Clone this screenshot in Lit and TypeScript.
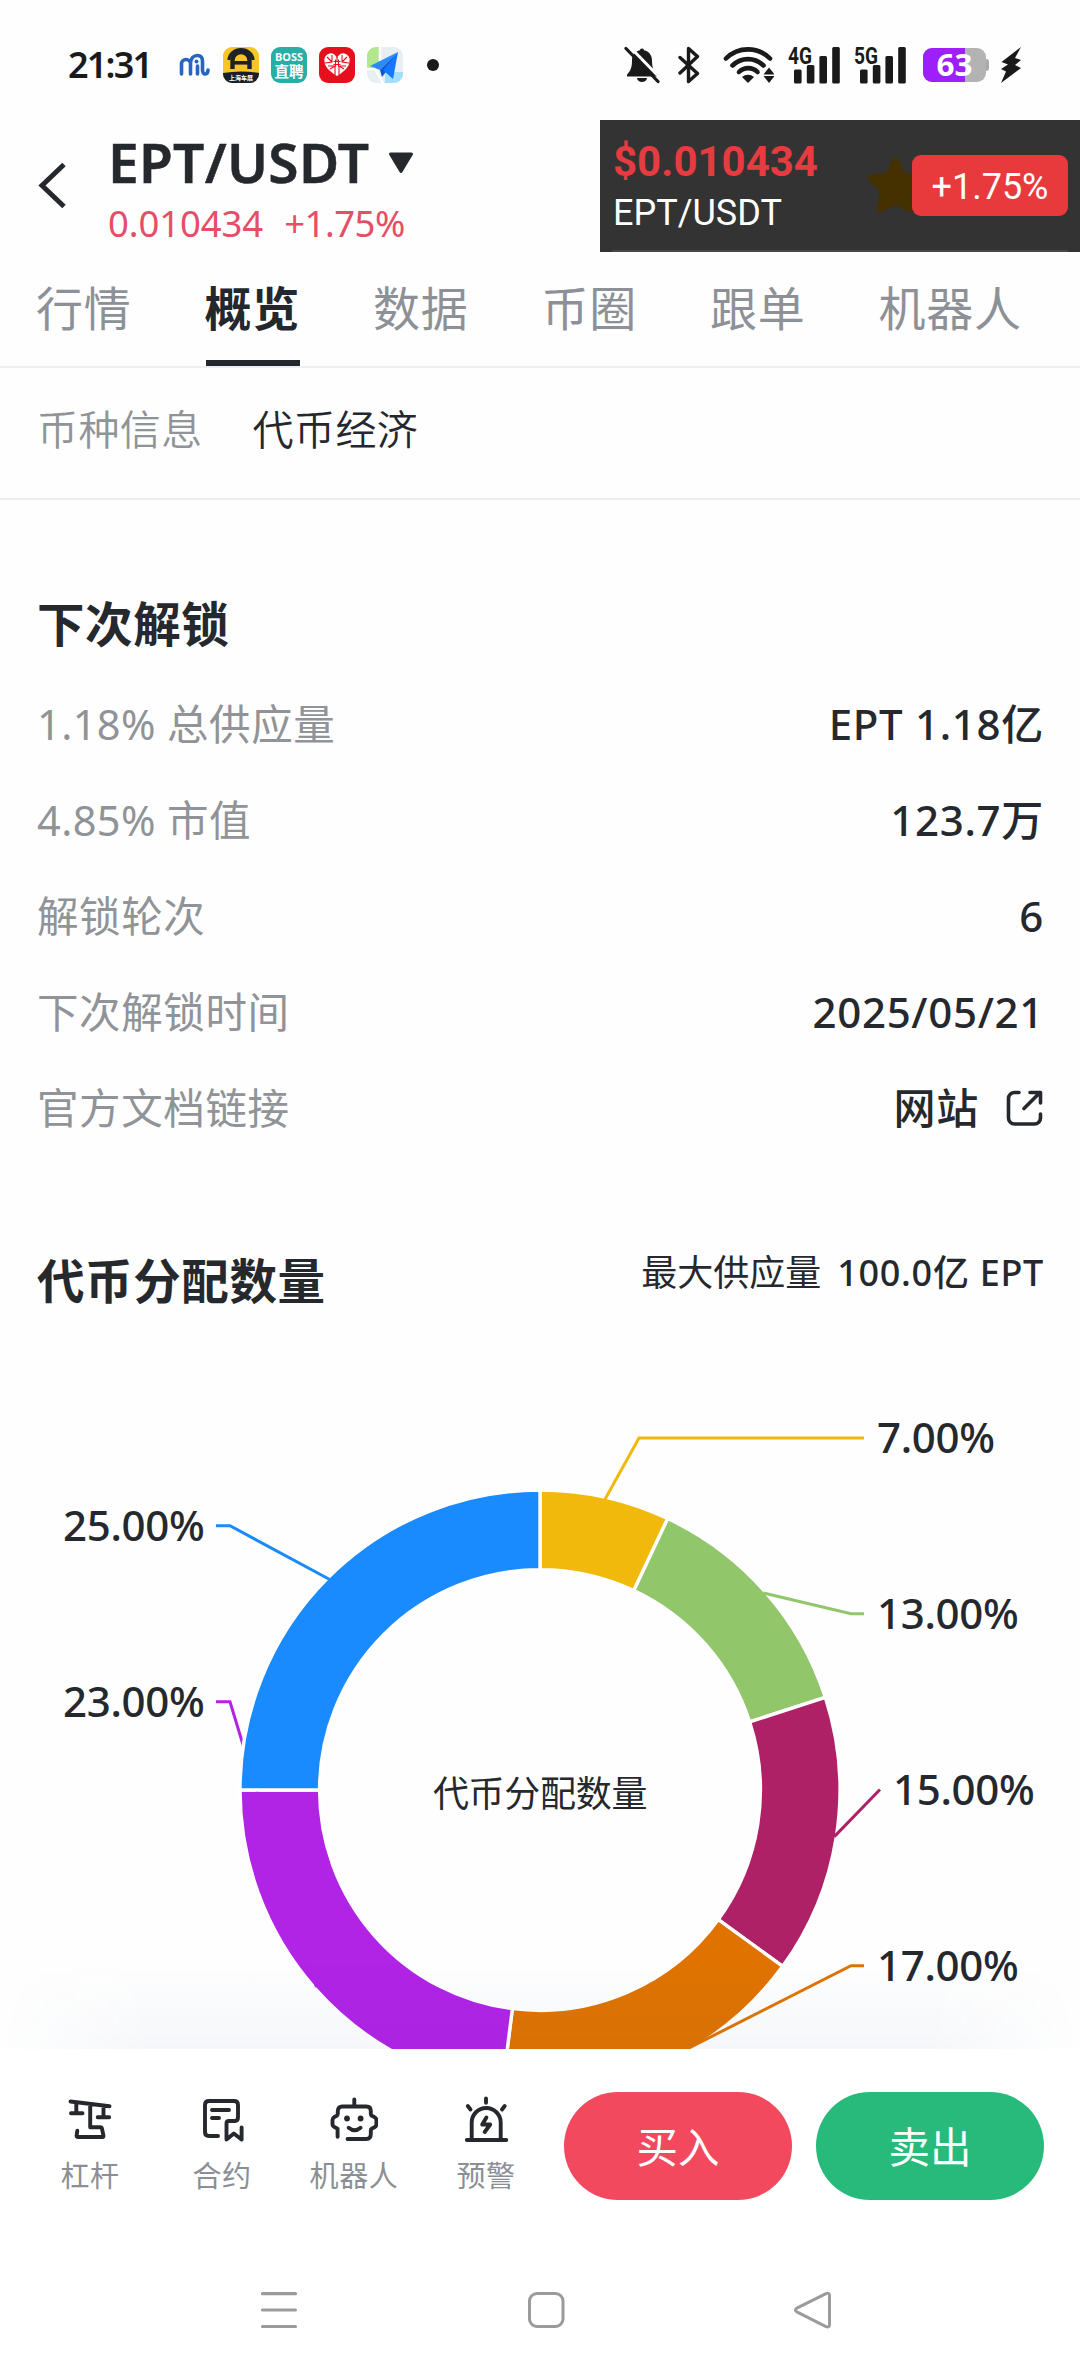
import { LitElement, html, svg, css } from "lit";
import { customElement, property } from "lit/decorators.js";

const FONT = css`"Noto Sans", "Noto Sans CJK SC", sans-serif`;

/* ---------- Status bar ---------- */
@customElement("status-bar")
export class StatusBar extends LitElement {
  static styles = css`
    :host { display: flex; height: 120px; align-items: flex-start; padding-top: 40px; box-sizing: border-box; font-family: ${FONT}; color: #1a1a1a; }
    svg { display: block; flex: none; }
    .left, .right { display: flex; align-items: center; height: 50px; }
    .left { padding-left: 68px; }
    .time { width: 84px; font-size: 36px; font-weight: 600; line-height: 50px; letter-spacing: -1.8px; white-space: nowrap; }
    .apps { display: flex; align-items: center; gap: 12px; padding-left: 13px; }
    .mark { margin-left: 27px; }
    .dot { width: 12px; height: 12px; border-radius: 50%; background: #1a1a1a; margin-left: 24px; }
    .right { margin-left: auto; padding-right: 58px; }
    .bt { margin-left: 18px; }
    .wifi { margin-left: 23px; }
    .net { margin-left: 14px; }
    .net2 { margin-left: 12px; }
    .bat { margin-left: 15px; }
    .bolt { margin-left: 11px; }
  `;

  private signal(label: string, cls: string) {
    return html`<svg class=${cls} width="54" height="60" viewBox="0 -10 54 60">
      <text x="0" y="18.500" font-family="Roboto, sans-serif" font-weight="700" font-size="23" textLength="24" lengthAdjust="spacingAndGlyphs" fill="#1a1a1a">${label}</text>
      <g fill="#1a1a1a">
        <rect x="6" y="24.500" width="7.600" height="14" rx="1.500"/><rect x="18.800" y="20" width="7.600" height="18.500" rx="1.500"/>
        <rect x="31.400" y="11" width="7.600" height="27.500" rx="1.500"/><rect x="44.200" y="2" width="7.600" height="36.500" rx="1.500"/>
      </g></svg>`;
  }

  render() {
    return html`
      <div class="left">
        <span class="time">21:31</span>
        <svg class="mark" width="31" height="24" viewBox="0 0 31 24" fill="none" stroke="#2666bd" stroke-width="3.600" stroke-linecap="round">
          <path d="M2.500 21V11a4.500 4.500 0 0 1 9 0V21M11.500 10c.3-4.500 3-7.500 7-7.500 3.500 0 5 2.500 5 6v8.500c0 5.500 5.500 5 5.500 0"/>
          <circle cx="17.500" cy="8.500" r="2" fill="#2666bd" stroke="none"/>
          <path d="M18.500 13v8"/>
        </svg>
        <div class="apps">
          <svg width="36" height="36" viewBox="0 0 36 36">
            <defs><clipPath id="a"><rect width="36" height="36" rx="9"/></clipPath></defs>
            <g clip-path="url(#a)">
              <rect width="36" height="36" fill="#f8c527"/>
              <path d="M9.500 22V13.500a8.500 8.500 0 0 1 17 0V22" fill="none" stroke="#1d2226" stroke-width="4.400"/>
              <path d="M6 13a12 10.500 0 0 1 24 0" fill="none" stroke="#1d2226" stroke-width="3"/>
              <rect x="10" y="14" width="16" height="3.600" fill="#1d2226"/>
              <path d="M0 26q18-3 36 0v10H0z" fill="#16202a"/>
              <text x="18" y="32.500" text-anchor="middle" font-family="Noto Sans CJK SC" font-weight="700" font-size="6" fill="#fff">上海车展</text>
            </g>
          </svg>
          <svg width="36" height="36" viewBox="0 0 36 36">
            <rect width="36" height="36" rx="9" fill="#27aea6"/>
            <text x="18" y="14" text-anchor="middle" font-family="Noto Sans" font-weight="700" font-size="10.500" textLength="28" lengthAdjust="spacingAndGlyphs" fill="#fff">BOSS</text>
            <text x="18" y="29.500" text-anchor="middle" font-family="Noto Sans CJK SC" font-weight="700" font-size="14.500" fill="#fff">直聘</text>
          </svg>
          <svg width="36" height="36" viewBox="0 0 36 36">
            <rect width="36" height="36" rx="9" fill="#e60f1c"/>
            <path d="M18 29C10 24 5.500 19.500 5.500 14a6.300 6.300 0 0 1 12.500-2.500A6.300 6.300 0 0 1 30.500 14C30.500 19.500 26 24 18 29z" fill="#fff"/>
            <path d="M13 8v7l-7 1M23 8v7l7 1M18 10v4M11 22l5-3v9M25 22l-5-3v9M14.500 14.500h7M14.500 17.500h7M16.500 12.500v7M19.500 12.500v7M8 10l5 5M28 10l-5 5M9 19h6M21 19h6" stroke="#e60f1c" stroke-width="1.100" fill="none"/>
          </svg>
          <svg width="36" height="36" viewBox="0 0 36 36">
            <defs><clipPath id="m"><rect width="36" height="36" rx="9"/></clipPath></defs>
            <g clip-path="url(#m)">
              <rect width="36" height="36" fill="#e9eef2"/>
              <rect width="13" height="22" fill="#b4e690"/><path d="M18 25h18v11H18z" fill="#a3dffb"/>
              <path d="M13 0v14M0 22h8l8 14" stroke="#fff" stroke-width="2.500" fill="none"/>
            </g>
            <path d="M31 5 3 19l10 4z" fill="#2b8cff"/><path d="M31 5 13 23l2 7 3.500-4.500z" fill="#0d55c8"/><path d="M31 5 26 32l-10-9z" fill="#1576ff"/>
          </svg>
        </div>
        <span class="dot"></span>
      </div>
      <div class="right">
        <svg width="36" height="38" viewBox="0 0 36 38">
          <path d="M18 2.500c1.500 0 2 1 2 1.800 5 1.200 8 4.700 8 10.200 0 7 1.500 10.500 5 14v2H3v-2c3.500-3.500 5-7 5-14 0-5.500 3-9 8-10.200 0-.8.500-1.800 2-1.800z" fill="#1a1a1a"/>
          <path d="M13 32h10a5 4 0 0 1-10 0z" fill="#1a1a1a"/>
          <path d="m4.500-.5 33 34" stroke="#fff" stroke-width="3"/>
          <path d="m2 2.500 32 33" stroke="#1a1a1a" stroke-width="3.200" stroke-linecap="round"/>
        </svg>
        <svg class="bt" width="22" height="38" viewBox="0 0 22 38" fill="none" stroke="#1a1a1a" stroke-width="3.400" stroke-linejoin="round" stroke-linecap="round">
          <path d="m2 11.500 17.500 16-9 8V2.500l9 8L2 27"/>
        </svg>
        <svg class="wifi" width="51" height="38" viewBox="0 0 51 38">
          <g fill="none" stroke="#1a1a1a" stroke-width="4.600" stroke-linecap="round">
            <path d="M3 12.500a31 31 0 0 1 44 0"/><path d="M9.500 19.500a22 22 0 0 1 31 0"/><path d="M16 26a13 13 0 0 1 18.500 0"/>
          </g>
          <path d="M25 37l-6-6a9 9 0 0 1 12 0z" fill="#1a1a1a"/>
          <path d="M46 21.500l-5.500 7h11z" fill="#1a1a1a"/><path d="M46 37l-5.500-7h11z" fill="#1a1a1a"/>
        </svg>
        ${this.signal("4G", "net")}
        ${this.signal("5G", "net2")}
        <svg class="bat" width="66" height="58" viewBox="0 -10 66 58">
          <defs><clipPath id="b"><rect y="2" width="63" height="34" rx="9"/></clipPath></defs>
          <rect x="60" y="13" width="6" height="12" rx="3" fill="#a9a9a9"/>
          <g clip-path="url(#b)"><rect width="66" height="38" fill="#b3b3b3"/><rect width="42" height="38" fill="#9d20fa"/></g>
          <text x="31.500" y="30" text-anchor="middle" font-family="Noto Sans" font-weight="700" font-size="30.500" textLength="36" lengthAdjust="spacingAndGlyphs" fill="#fff">63</text>
        </svg>
        <svg class="bolt" width="22" height="38" viewBox="0 0 22 38"><path d="M21 1 1.500 16l6.500 2.500L1 23l5 2.500-5 11.500 20-15-6-3 6-5-6-2z" fill="#1a1a1a"/></svg>
      </div>`;
  }
}

/* ---------- Pair header with floating price widget ---------- */
@customElement("pair-header")
export class PairHeader extends LitElement {
  static styles = css`
    :host { display: flex; height: 132px; font-family: ${FONT}; color: #25282d; white-space: nowrap; }
    svg { display: block; flex: none; }
    .back { margin: 41px 0 0 36px; }
    .pair { margin-left: 40px; }
    .title { display: flex; align-items: center; height: 80px; gap: 19px; margin-top: 2px; }
    .name { font-size: 55px; font-weight: 600; line-height: 80px; letter-spacing: 0.3px; -webkit-text-stroke: 0.5px #25282d; }
    .caret { margin-top: 2px; }
    .quote { display: flex; gap: 21px; font-size: 36.5px; line-height: 40px; letter-spacing: -0.1px; color: #e54e66; margin-top: 1px; }
    .change { letter-spacing: -0.5px; }
    .widget { display: flex; justify-content: space-between; width: 480px; margin-left: auto; box-sizing: border-box; padding: 0 12px; background: #333; font-family: Roboto, sans-serif; }
    .in { display: flex; flex: 1; justify-content: space-between; box-sizing: border-box; border-bottom: 2px solid #474747; }
    .price { font-size: 42px; font-weight: 700; line-height: 50px; color: #e53c41; padding: 17px 0 0 1px; }
    .sym { font-size: 36px; line-height: 42px; color: #fff; padding-left: 1px; margin-top: 5px; }
    .side { display: flex; align-items: flex-start; padding-top: 35px; }
    .badge { width: 156px; height: 61px; border-radius: 9px; background: #e83a3d; color: #fff; font-size: 36px; line-height: 65px; text-align: center; }
    .star { margin: 0 -12px 0 0; }
  `;

  render() {
    return html`
      <svg class="back" width="32" height="50" viewBox="0 0 32 50"><path d="M28 3.500 6 24.500l22 21" fill="none" stroke="#25282d" stroke-width="5"/></svg>
      <div class="pair">
        <div class="title"><span class="name">EPT/USDT</span>
          <svg class="caret" width="26" height="22" viewBox="0 0 26 22"><path d="M2.500 2h21L13 19.500z" fill="#25282d" stroke="#25282d" stroke-width="3" stroke-linejoin="round"/></svg>
        </div>
        <div class="quote"><span>0.010434</span><span class="change">+1.75%</span></div>
      </div>
      <div class="widget"><div class="in">
        <div><div class="price">$0.010434</div><div class="sym">EPT/USDT</div></div>
        <div class="side">
          <svg class="star" width="57" height="60" viewBox="0 0 57 60"><path d="M28.500 6l7 15 17 2-12 12 3 19-15-8-15 8 3-19-12-12 17-2z" fill="#453100" stroke="#453100" stroke-width="7" stroke-linejoin="round"/></svg>
          <div class="badge">+1.75%</div>
        </div>
      </div></div>`;
  }
}

/* ---------- Tabs ---------- */
@customElement("page-tabs")
export class PageTabs extends LitElement {
  static styles = css`
    :host { display: block; font-family: ${FONT}; white-space: nowrap; }
    .tabs { display: flex; gap: 72.9px; height: 116px; box-sizing: border-box; border-bottom: 2px solid #efefef; padding-left: 36px; }
    .tab { position: relative; font-size: 47px; letter-spacing: 0.8px; line-height: 112px; color: #8d9197; font-weight: 400; }
    .on { font-weight: 700; color: #25272e; }
    .on::after { content: ""; position: absolute; left: 1px; bottom: 0; width: 94px; height: 6px; background: #25272e; }
    .subs { display: flex; gap: 50px; height: 132px; box-sizing: border-box; border-bottom: 2px solid #eee; padding-left: 37px; font-size: 41px; letter-spacing: 0.4px; line-height: 122px; color: #909397; font-weight: 350; }
    .sel { color: #25272e; }
  `;

  render() {
    const tabs = ["行情", "概览", "数据", "币圈", "跟单", "机器人"];
    return html`
      <div class="tabs">${tabs.map((t, i) => html`<span class="tab ${i === 1 ? "on" : ""}">${t}</span>`)}</div>
      <div class="subs"><span>币种信息</span><span class="sel">代币经济</span></div>`;
  }
}

/* ---------- Distribution chart ---------- */
interface Slice {
  share: number;
  color: string;
  edge: number;
  elbow: number;
  y: number;
  textX: number;
}

const SLICES: Slice[] = [
  { share: 7, color: "#f2b90d", edge: 864, elbow: 639, y: 108, textX: 877 },
  { share: 13, color: "#91c66b", edge: 864, elbow: 851, y: 283.7, textX: 877 },
  { share: 15, color: "#af2166", edge: 880, elbow: 880, y: 459.5, textX: 893 },
  { share: 17, color: "#e07300", edge: 864, elbow: 851, y: 635.7, textX: 877 },
  { share: 23, color: "#b123e5", edge: 216, elbow: 230, y: 371.8, textX: 63 },
  { share: 25, color: "#198bff", edge: 216, elbow: 230, y: 195.8, textX: 63 },
];

@customElement("token-donut")
export class TokenDonut extends LitElement {
  @property({ attribute: false }) slices: Slice[] = SLICES;

  static styles = css`
    :host { display: block; }
    svg { display: block; }
    text { font-family: ${FONT}; fill: #25282d; }
    .pct { font-size: 42px; font-weight: 500; letter-spacing: -0.3px; }
    .mid { font-size: 36px; letter-spacing: -0.3px; }
    .lead { fill: none; stroke-width: 3; }
    .arc { stroke: #fff; stroke-width: 3.4; }
  `;

  private point(percent: number, r: number): [number, number] {
    const a = (percent / 100) * Math.PI * 2;
    return [540 + r * Math.sin(a), 460 - r * Math.cos(a)];
  }

  render() {
    const outer = 300;
    const inner = 220.4;
    let at = 0;
    const placed = this.slices.map((s) => {
      const from = at;
      at += s.share;
      return { s, from, to: at, mid: from + s.share / 2 };
    });
    return html`<svg width="1080" height="760" viewBox="0 0 1080 760">
      ${placed.map(({ s, from, to, mid }) => {
        const [ax, ay] = this.point(from, outer);
        const [bx, by] = this.point(to, outer);
        const [cx, cy] = this.point(to, inner);
        const [dx, dy] = this.point(from, inner);
        const [mx, my] = this.point(mid, 298);
        return svg`<path class="arc" fill=${s.color} d="M${ax} ${ay}A${outer} ${outer} 0 0 1 ${bx} ${by}L${cx} ${cy}A${inner} ${inner} 0 0 0 ${dx} ${dy}z"/>
          <path class="lead" stroke=${s.color} d="M${s.edge} ${s.y}L${s.elbow} ${s.y}L${mx} ${my}"/>`;
      })}
      ${placed.map(({ s }) => svg`<text class="pct" x=${s.textX} y=${s.y + 15}>${s.share.toFixed(2)}%</text>`)}
      <text class="mid" x="540" y="476.500" text-anchor="middle">代币分配数量</text>
    </svg>`;
  }
}

/* ---------- Token economics ---------- */
@customElement("token-economy")
export class TokenEconomy extends LitElement {
  static styles = css`
    :host { display: block; position: relative; flex: 1; min-height: 0; overflow: hidden; font-family: ${FONT}; color: #25282d; white-space: nowrap; }
    h2 { margin: 0; font-size: 47.5px; font-weight: 700; line-height: 60px; letter-spacing: 0.6px; }
    .unlock { padding: 94px 36px 0 37px; }
    .rows { padding-top: 22px; }
    .row { display: flex; justify-content: space-between; align-items: center; height: 96px; line-height: 96px; }
    .label { color: #909397; font-size: 41.5px; letter-spacing: 0.6px; }
    .num { letter-spacing: 0.4px; }
    .value { display: flex; align-items: center; font-size: 42px; font-weight: 500; letter-spacing: 0.7px; }
    .ext { display: block; margin-left: 25px; }
    .alloc { display: flex; justify-content: space-between; align-items: flex-start; padding: 95px 36px 0 37px; height: 79px; }
    .supply { display: flex; gap: 16px; font-size: 36px; line-height: 44px; }
    .supply b { font-weight: 500; letter-spacing: 0.7px; }
    .shade { position: absolute; left: 0; right: 0; bottom: 0; height: 90px;
      background: linear-gradient(to bottom, rgba(40, 85, 150, 0), rgba(40, 80, 150, 0.04));
      -webkit-mask-image: linear-gradient(to right, transparent, #000 14%, #000 86%, transparent); mask-image: linear-gradient(to right, transparent, #000 14%, #000 86%, transparent); }
  `;

  render() {
    const rows = [
      ["1.18% ", "总供应量", "EPT 1.18亿"],
      ["4.85% ", "市值", "123.7万"],
      ["", "解锁轮次", "6"],
      ["", "下次解锁时间", "2025/05/21"],
      ["", "官方文档链接", "网站"],
    ];
    return html`
      <section class="unlock">
        <h2>下次解锁</h2>
        <div class="rows">
          ${rows.map(([n, k, v], i) => html`<div class="row"><span class="label"><span class="num">${n}</span>${k}</span><span class="value">${v}${i === 4
            ? html`<svg class="ext" width="40" height="40" viewBox="0 0 40 40" fill="none" stroke="#25282d" stroke-width="3.600" stroke-linecap="round" stroke-linejoin="round">
                <path d="M15 4.500h-4.500a6 6 0 0 0-6 6V30a6 6 0 0 0 6 6h20a6 6 0 0 0 6-6v-4M20 20.500l16-16M26 4.500h10.500V15"/></svg>`
            : ""}</span></div>`)}
        </div>
      </section>
      <section class="alloc">
        <h2>代币分配数量</h2>
        <div class="supply"><span>最大供应量</span><b>100.0亿 EPT</b></div>
      </section>
      <token-donut></token-donut>
      <div class="shade"></div>`;
  }
}

/* ---------- Action bar and system navigation ---------- */
@customElement("action-bar")
export class ActionBar extends LitElement {
  static styles = css`
    :host { display: block; height: 327px; background: #fff; font-family: ${FONT}; white-space: nowrap; }
    svg { display: block; flex: none; }
    .bar { display: flex; align-items: flex-start; padding: 43px 36px 0 24px; height: 164px; }
    .item { width: 132px; display: flex; flex-direction: column; align-items: center; padding-top: 2px; font-size: 29px; line-height: 40px; letter-spacing: 0.6px; color: #8b8f95; gap: 12px; }
    .btn { width: 228px; height: 108px; border-radius: 54px; color: #fff; font-size: 41.5px; line-height: 110px; text-align: center; }
    .buy { background: #f3495e; margin-left: 12px; }
    .sell { background: #27ba7b; margin-left: 24px; }
    .nav { display: flex; padding: 32px 246px 0 258px; justify-content: space-between; }
  `;

  render() {
    const icon = (body: unknown) => html`<svg width="48" height="50" viewBox="0 0 48 50" fill="none" stroke="#25282d" stroke-width="3.900" stroke-linecap="round" stroke-linejoin="round">${body}</svg>`;
    const items = [
      { t: "杠杆", i: svg`<path d="M4.500 7.500l39 4.800M10.300 8.500v10.800M5 19.300h11.500M37.500 12v11.300M31.700 23.300h11.500M24.200 10.500v22.800h10q1.500 0 1.800 1.500l1.500 7q.2 1.200-1 1.200H12q-1.500 0-1.400-1.300l.7-5"/>` },
      { t: "合约", i: svg`<path d="M20 42H11q-4 0-4-4V11q0-4 4-4h25q4 0 4 4v12q0 4-3 4h-6q-2.500 0-2.500 2.500V45.500l7.300-6 7.800 6V33.500M14 16h17M14 24h7"/>` },
      { t: "机器人", i: svg`<path d="M24.300 5.500v7M7.600 42.700v-8l-3.200-1.600q-1.900-1-1.900-3v-4q0-2 1.900-3.100l2.300-1.200q1.100-.7 1.100-2V17q0-4.500 4.500-4.500h24q4.500 0 4.500 4.500v2.800q0 1.300 1 2l2.600 1.300q2 1.100 2 3.100v4q0 2-1.900 3l-2.500 1.300q-1.200.7-1.200 2V40q0 5-4.500 5H17.500M18.700 33.800q5.900 5 11.800 0"/><circle cx="17" cy="24.500" r="2.900" fill="#25282d" stroke="none"/><circle cx="30.600" cy="24.500" r="2.900" fill="#25282d" stroke="none"/>` },
      { t: "预警", i: svg`<path d="M4.800 46h39.500M9.700 45V28.500a14.500 14.500 0 0 1 29 0V45M24 4.500v4.200M5.800 12l2.700 3.500M42.700 12 40 15.500M24.400 23.500l-4.200 7h8l-5.500 7.500"/>` },
    ];
    return html`
      <div class="bar">
        ${items.map((x) => html`<div class="item">${icon(x.i)}<span>${x.t}</span></div>`)}
        <div class="btn buy">买入</div>
        <div class="btn sell">卖出</div>
      </div>
      <div class="nav">
        <svg width="42" height="44" viewBox="0 0 42 44" stroke="#9b9b9b" stroke-width="3.200" stroke-linecap="round"><path d="M4.500 5.700h33M4.500 22h33M4.500 38.500h33"/></svg>
        <svg width="42" height="44" viewBox="0 0 42 44" fill="none" stroke="#9b9b9b" stroke-width="3"><rect x="4.500" y="5.500" width="33.500" height="33" rx="7.500"/></svg>
        <svg width="42" height="44" viewBox="0 0 42 44" fill="none" stroke="#9b9b9b" stroke-width="3" stroke-linejoin="round"><path d="M4.800 20.200 34 5.600q3.500-1.200 3.500 2v29q0 3.200-3.500 2L4.800 23.800q-2.800-1.800 0-3.600z"/></svg>
      </div>`;
  }
}

@customElement("app-root")
export class AppRoot extends LitElement {
  static styles = css`
    :host { display: flex; flex-direction: column; width: 1080px; height: 2376px; overflow: hidden; background: #fefefe; }
  `;

  render() {
    return html`
      <status-bar></status-bar>
      <pair-header></pair-header>
      <page-tabs></page-tabs>
      <token-economy></token-economy>
      <action-bar></action-bar>`;
  }
}
